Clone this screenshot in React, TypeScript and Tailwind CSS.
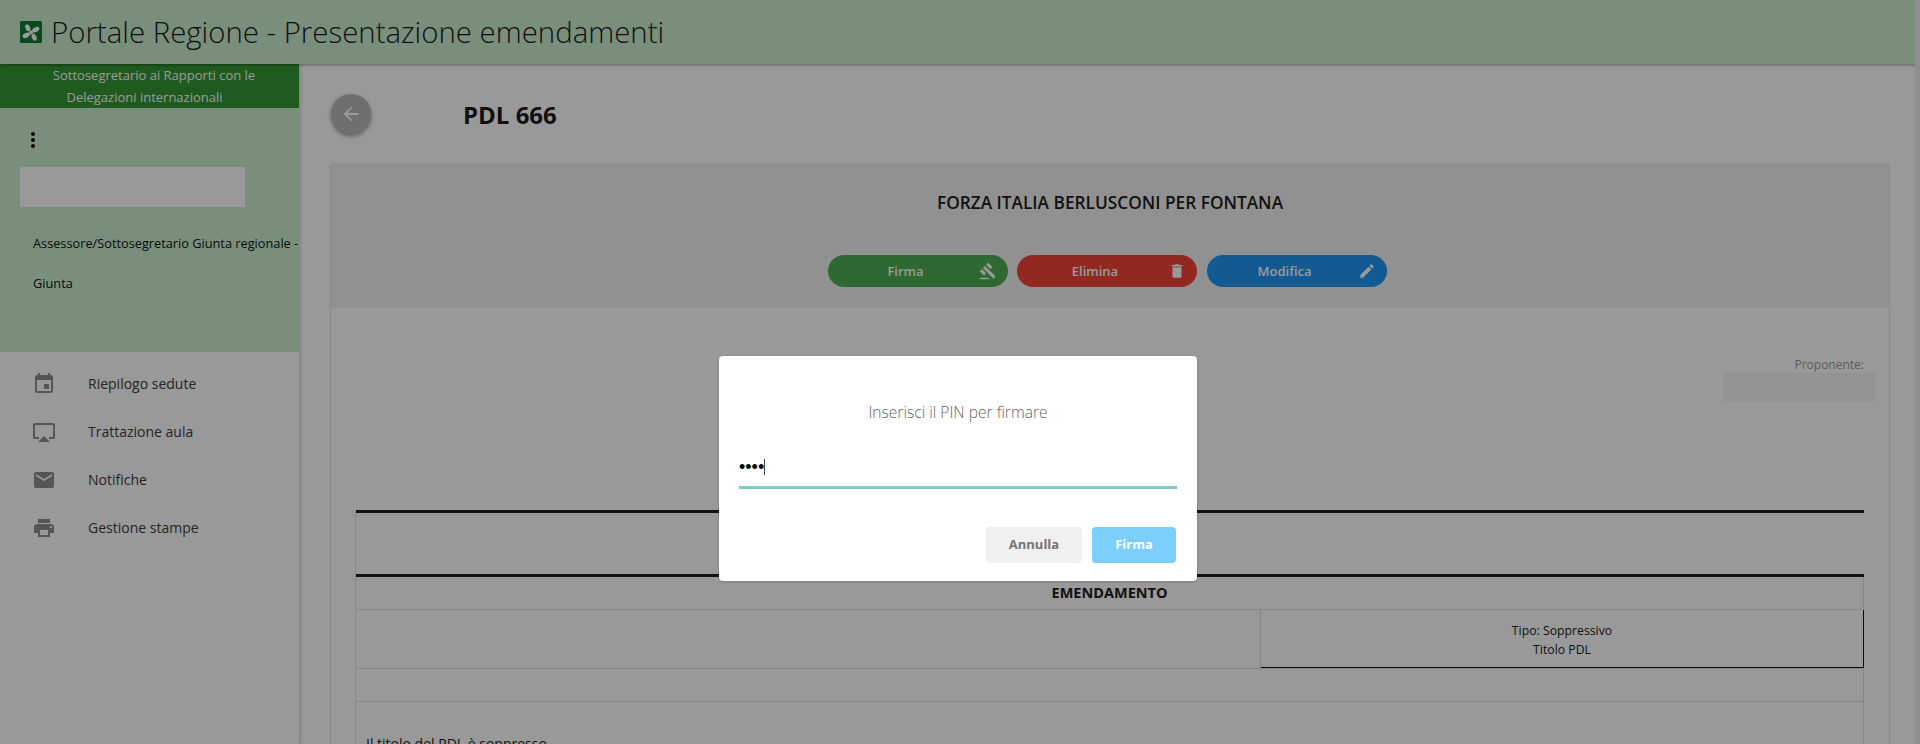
import { MdArrowBack, MdMoreVert, MdEvent, MdAirplay, MdEmail, MdPrint, MdGavel, MdDelete, MdEdit } from "react-icons/md";

function Logo() {
  return (
    <svg width="22" height="22" viewBox="0 0 22 22" className="shrink-0">
      <rect width="22" height="22" rx="1.5" fill="#0f7a35" />
      <g fill="#ffffff">
        <circle cx="11" cy="11.5" r="2" />
        <ellipse cx="7.8" cy="6.8" rx="2.3" ry="3.6" transform="rotate(-25 7.8 6.8)" />
        <ellipse cx="15.8" cy="8.6" rx="2.3" ry="3.8" transform="rotate(65 15.8 8.6)" />
        <ellipse cx="14.2" cy="16.2" rx="2.3" ry="3.6" transform="rotate(-25 14.2 16.2)" />
        <ellipse cx="6.2" cy="14.4" rx="2.3" ry="3.8" transform="rotate(65 6.2 14.4)" />
      </g>
    </svg>
  );
}

function MenuItem({ icon, label }: { icon: React.ReactNode; label: string }) {
  return (
    <div className="flex h-12 items-center">
      <div className="flex w-[88px] justify-center">
        <span className="text-[#8e8e8e]">{icon}</span>
      </div>
      <span className="text-sm text-[#3c3c3c]">{label}</span>
    </div>
  );
}

function ActionButton({ label, color, icon }: { label: string; color: string; icon: React.ReactNode }) {
  return (
    <button className={`relative flex h-8 w-[180px] items-center justify-center rounded-full pr-6 text-[13px] font-semibold text-white ${color}`}>
      <span className="mt-px">{label}</span>
      <span className="absolute right-[11px]">{icon}</span>
    </button>
  );
}

export default function App() {
  return (
    <div className="relative h-[744px] overflow-hidden bg-white font-['Open_Sans',sans-serif]">
      <div className="absolute inset-y-0 right-0 z-20 w-[5px] bg-[#eeeeee]"></div>

      {/*header*/}
      <header className="relative z-10 flex h-16 items-center gap-[9px] bg-[#cbeece] pl-5 shadow-[0_1px_3px_rgba(0,0,0,0.4)]">
        <Logo />
        <h1 className="text-[29.4px] font-light text-[#1a1a1a]">Portale Regione - Presentazione emendamenti</h1>
      </header>

      <div className="flex h-[680px]">
        {/*sidebar*/}
        <aside className="w-[300px] shrink-0 border-r border-[#e2e2e2] shadow-[1px_0_3px_rgba(0,0,0,0.15)]">
          <div className="h-[288px] overflow-hidden bg-[#cbeece]">
            <div className="flex h-11 flex-col items-center justify-center bg-[#349635] text-[13px] leading-[22px] text-white">
              <span className="pl-[9px]">Sottosegretario ai Rapporti con le</span>
              <span className="pr-[10px]">Delegazioni internazionali</span>
            </div>
            <div className="mt-5 pl-[21px] text-[#111]">
              <MdMoreVert size={24} />
            </div>
            <div className="mt-[15px] ml-5 h-10 w-[225px] bg-white"></div>
            <p className="mt-[26px] ml-[33px] text-[12.75px] leading-[20px] whitespace-nowrap text-[#111]">
              Assessore/Sottosegretario Giunta regionale -
            </p>
            <p className="mt-5 ml-[33px] text-[12.75px] leading-[20px] text-[#111]">Giunta</p>
          </div>
          <nav className="pt-[8px]">
            <MenuItem icon={<MdEvent size={24} />} label="Riepilogo sedute" />
            <MenuItem icon={<MdAirplay size={24} />} label="Trattazione aula" />
            <MenuItem icon={<MdEmail size={24} />} label="Notifiche" />
            <MenuItem icon={<MdPrint size={24} />} label="Gestione stampe" />
          </nav>
        </aside>

        {/*main*/}
        <main className="flex-1 pr-[31px] pl-[31px]">
          <div className="flex h-[101px] items-start pt-[30px]">
            <button className="flex h-10 w-10 items-center justify-center rounded-full bg-[#b9b9b9] text-white shadow-[0_2px_4px_rgba(0,0,0,0.4)]">
              <MdArrowBack size={22} />
            </button>
            <h2 className="mt-[3px] ml-[92px] text-2xl leading-9 font-bold text-[#1c1c1c]">PDL 666</h2>
          </div>

          <section className="h-[600px] bg-white shadow-[0_0_2px_rgba(0,0,0,0.3)]">
            <div className="flex h-[143px] flex-col items-center bg-[#f2f2f2]">
              <h3 className="mt-[26px] text-[17.25px] leading-6 font-semibold text-[#1c1c1c]">FORZA ITALIA BERLUSCONI PER FONTANA</h3>
              <div className="mt-[40px] mr-[6px] flex gap-[9.5px]">
                <ActionButton label="Firma" color="bg-[#4caf50]" icon={<MdGavel size={18} />} />
                <ActionButton label="Elimina" color="bg-[#f44336]" icon={<MdDelete size={18} />} />
                <ActionButton label="Modifica" color="bg-[#2196f3]" icon={<MdEdit size={18} />} />
              </div>
            </div>

            <div className="flex h-[94px] flex-col items-end pt-[49px] pr-[14px]">
              <span className="mr-[11px] text-[12px] leading-4 text-[#999]">Proponente:</span>
              <div className="h-[29px] w-[152px] shrink-0 bg-[#f5f5f5]"></div>
            </div>

            {/*tabella*/}
            <div className="mt-[108px] ml-6 w-[1509px] border-l border-[#e6e6e6]">
              <div className="h-[67px] border-y-[3px] border-[#1f1f1f]"></div>
              <div className="flex h-[33px] items-center justify-center border-r border-b border-[#e0e0e0] text-[14.5px] font-bold text-[#1c1c1c]">EMENDAMENTO</div>
              <div className="flex h-[59px] border-b border-[#dedede]">
                <div className="w-[905px] border-r border-[#dedede]"></div>
                <div className="flex flex-1 flex-col items-center justify-center border-r border-b border-[#111] pt-[3px] text-[12.25px] leading-[19px] text-[#222]">
                  <span>Tipo: Soppressivo</span>
                  <span>Titolo PDL</span>
                </div>
              </div>
              <div className="h-[33px] border-r border-b border-[#dedede]"></div>
              <div className="h-[80px] border-r border-[#e6e6e6] pt-[32px] pl-[10px] text-sm leading-5 text-[#222]">Il titolo del PDL è soppresso</div>
            </div>
          </section>
        </main>
      </div>

      {/*overlay + dialog pin*/}
      <div className="absolute inset-0 z-30 flex justify-center bg-black/40 pt-[356px] pr-[4px]">
        <div className="flex h-[225px] w-[478px] flex-col rounded-[4px] bg-white px-5 shadow-[0_1px_3px_rgba(0,0,0,0.2)]">
          <p className="mt-[44px] text-center text-[15.6px] leading-6 font-light text-[#666]">Inserisci il PIN per firmare</p>
          <div className="mt-[26px] flex h-[39px] items-center border-b-[3px] border-[#80cbc4] pb-[2px]">
            <span className="font-['Liberation_Sans',sans-serif] text-[18px] leading-4 text-black">••••</span>
            <span className="h-4 w-px bg-[#444]"></span>
          </div>
          <div className="mt-[38px] flex justify-end gap-[10px] pr-px">
            <button className="h-9 w-[96px] rounded-[4px] bg-[#f0f0f0] text-[13px] font-bold text-[#757575]">Annulla</button>
            <button className="h-9 w-[84px] rounded-[4px] bg-[#7ccefb] text-[13px] font-bold text-white">Firma</button>
          </div>
        </div>
      </div>
    </div>
  );
}
